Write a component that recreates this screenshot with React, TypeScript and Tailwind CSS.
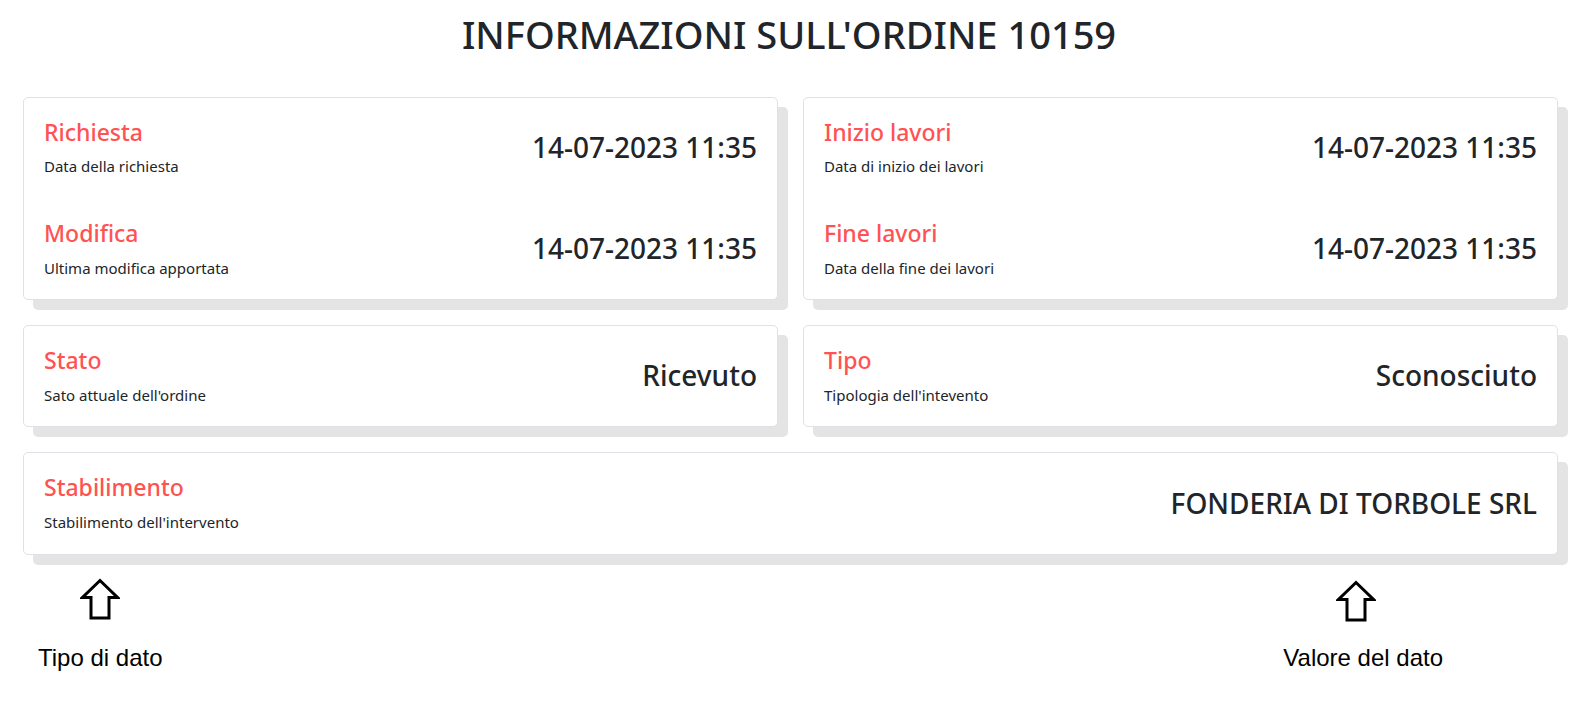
import React from "react";

type Field = {
  label: string;
  hint: string;
  value: string;
};

const font = { fontFamily: '"Noto Sans", "Open Sans", sans-serif' };

function UpArrow() {
  return (
    <svg width="40" height="42" viewBox="0 0 40 42" className="block">
      <polygon
        points="20,2.5 37.5,19.5 29,19.5 29,40 11,40 11,19.5 2.5,19.5"
        fill="white"
        stroke="black"
        strokeWidth="3"
        strokeLinejoin="miter"
      />
    </svg>
  );
}

function FieldRow({ field }: { field: Field }) {
  return (
    <div className="flex items-center justify-between">
      <div>
        <h4 className="mb-[9px] text-[23px] font-medium leading-[1.25] text-[#ff5252]">{field.label}</h4>
        <p className="text-[15px] leading-[1.5] text-[#212529]">{field.hint}</p>
      </div>
      <h3 className="text-right text-[28px] font-medium leading-[1.2] text-[#212529]">{field.value}</h3>
    </div>
  );
}

function InfoCard({ fields }: { fields: Field[] }) {
  return (
    <div className="flex flex-col gap-[41px] rounded-[5px] border border-[#dee2e6] bg-white p-5 shadow-[10px_10px_0_#e4e4e4]">
      {fields.map((f) => (
        <FieldRow key={f.label} field={f} />
      ))}
    </div>
  );
}

export default function App() {
  const data = "14-07-2023 11:35";

  return (
    <div className="min-h-screen bg-white" style={font}>
      <h1 className="pt-[12px] text-center text-[38px] font-medium leading-[1.2] text-[#212529]">
        INFORMAZIONI SULL'ORDINE 10159
      </h1>

      {/* ── Cards ── */}
      <div className="mt-[39px] flex flex-col gap-[25px] pl-[23px] pr-[20px]">
        <div className="grid grid-cols-2 gap-[25px]">
          <InfoCard
            fields={[
              { label: "Richiesta", hint: "Data della richiesta", value: data },
              { label: "Modifica", hint: "Ultima modifica apportata", value: data }
            ]}
          />
          <InfoCard
            fields={[
              { label: "Inizio lavori", hint: "Data di inizio dei lavori", value: data },
              { label: "Fine lavori", hint: "Data della fine dei lavori", value: data }
            ]}
          />
        </div>
        <div className="grid grid-cols-2 gap-[25px]">
          <InfoCard fields={[{ label: "Stato", hint: "Sato attuale dell'ordine", value: "Ricevuto" }]} />
          <InfoCard fields={[{ label: "Tipo", hint: "Tipologia dell'intevento", value: "Sconosciuto" }]} />
        </div>
        <InfoCard
          fields={[
            { label: "Stabilimento", hint: "Stabilimento dell'intervento", value: "FONDERIA DI TORBOLE SRL" }
          ]}
        />
      </div>

      {/* ── Legend ── */}
      <div
        className="mt-[23px] flex items-start justify-between pl-[38px] pr-[135px] text-[24px] leading-[1.15] text-black"
        style={{ fontFamily: '"Liberation Sans", Arial, sans-serif' }}
      >
        <div className="flex flex-col items-center">
          <UpArrow />
          <span className="mt-[24px]">Tipo di dato</span>
        </div>
        <div className="flex flex-col items-center">
          <div className="mr-[15px] mt-[2px]">
            <UpArrow />
          </div>
          <span className="mt-[22px]">Valore del dato</span>
        </div>
      </div>
    </div>
  );
}
